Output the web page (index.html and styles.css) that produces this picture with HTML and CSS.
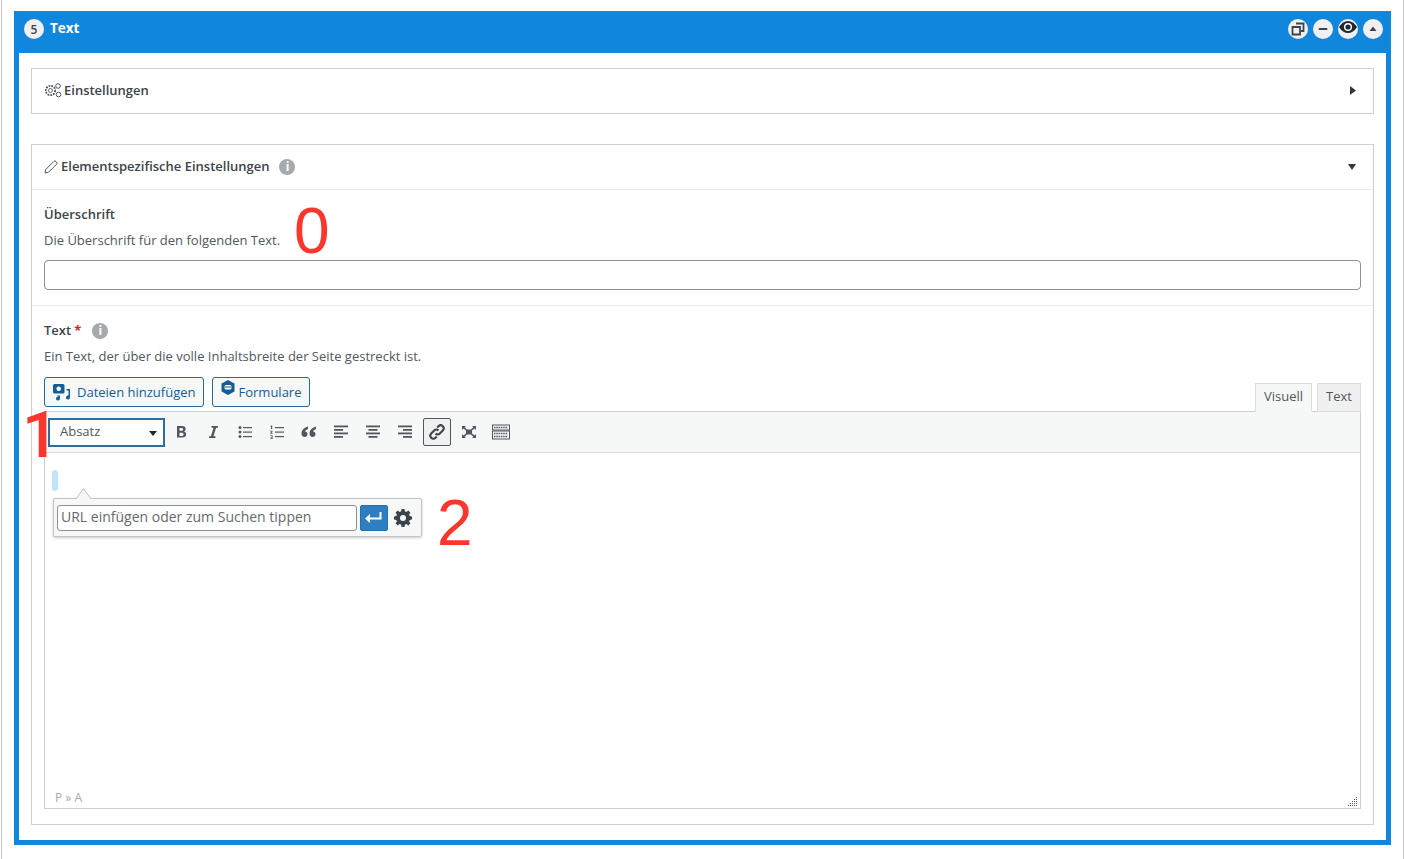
FILE: index.html
```html
<!DOCTYPE html>
<html lang="de">
<head>
<meta charset="utf-8">
<title>Text</title>
<link rel="stylesheet" href="styles.css">
</head>
<body>
<div class="page">
  <section class="panel">
    <header class="panel-head">
      <span class="badge">5</span>
      <span class="panel-title">Text</span>
      <div class="panel-actions">
        <span class="round"><svg width="14" height="14" viewBox="0 0 14 14"><path d="M5 1.500h7.500V9H10M1.500 5H9v7.500H1.500z" fill="none" stroke="#3c434a" stroke-width="1.800"/></svg></span>
        <span class="round"><svg width="12" height="12" viewBox="0 0 12 12"><rect x="1.500" y="5" width="9" height="2" rx="1" fill="#3c434a"/></svg></span>
        <span class="round eye"><svg width="20" height="14" viewBox="0 0 20 14"><path d="M1 7c2.500-4 5.500-6 9-6s6.500 2 9 6c-2.500 4-5.500 6-9 6S3.500 11 1 7z" fill="#23282d"/><circle cx="10" cy="7" r="4" fill="#fff"/><circle cx="10" cy="7" r="2.600" fill="#23282d"/></svg></span>
        <span class="round"><svg width="8" height="6" viewBox="0 0 8 6"><path d="M4 .5 7.500 5H.5z" fill="#3c434a"/></svg></span>
      </div>
    </header>
    <div class="panel-body">
      <div class="box box-settings">
        <svg class="gears" width="18" height="15" viewBox="0 0 18 15" fill="none" stroke="#50575e"><circle cx="6.500" cy="7.500" r="4.700" stroke-width="1.800" stroke-dasharray="1.800 1"/><circle cx="6.500" cy="7.500" r="2" stroke-width=".9"/><circle cx="14" cy="3" r="2.300" stroke-width="1"/><circle cx="14.500" cy="11.500" r="2.300" stroke-width="1"/></svg>
        <span class="box-title">Einstellungen</span>
        <svg class="caret" width="6" height="9" viewBox="0 0 6 9"><path d="M0 0l6 4.500L0 9z" fill="#32373c"/></svg>
      </div>

      <div class="box box-main">
        <div class="box-head">
          <svg class="pencil" width="14" height="14" viewBox="0 0 14 14"><path d="M1 13l.8-3.600L9.800 1.400a1.500 1.500 0 0 1 2.100 0l.7.700a1.500 1.500 0 0 1 0 2.100L4.600 12.200z" fill="none" stroke="#50575e"/></svg>
          <span class="box-title">Elementspezifische Einstellungen</span>
          <span class="info">i</span>
          <svg class="caret" width="8" height="6" viewBox="0 0 8 6"><path d="M0 0h8L4 6z" fill="#32373c"/></svg>
        </div>

        <div class="field field-heading">
          <div class="label">Überschrift</div>
          <p class="desc">Die Überschrift für den folgenden Text.</p>
          <div class="text-input"></div>
        </div>

        <div class="field field-text">
          <div class="label">Text<span class="req">*</span><span class="info">i</span></div>
          <p class="desc">Ein Text, der über die volle Inhaltsbreite der Seite gestreckt ist.</p>
          <div class="media-row">
            <span class="btn"><svg width="18" height="18" viewBox="0 0 18 18"><path fill="#135e96" d="M1.500 1h8.500a1.500 1.500 0 0 1 1.500 1.500V9a1.500 1.500 0 0 1-1.500 1.500H1.500A1.500 1.500 0 0 1 0 9V2.500A1.500 1.500 0 0 1 1.500 1z"/><circle cx="5.700" cy="5.700" r="2.300" fill="#fff"/><path fill="#135e96" d="M4 12.500h3v3a2 2 0 1 1-1.500-1.900V13H4zM13.500 6H17v8.500a2 2 0 1 1-1.500-1.900V7.500h-2z"/></svg>Dateien hinzufügen</span>
            <span class="btn btn-form"><svg class="form-icon" width="14" height="16" viewBox="0 0 14 16"><path fill="#135e96" d="M7 0l6.500 3.500v8L7 15 .5 11.500v-8z"/><rect x="3.500" y="5" width="7" height="4.500" rx="1.500" fill="#fff"/><rect x="3.500" y="6.500" width="7" height="1" fill="#135e96"/></svg>Formulare</span>
          </div>

          <div class="editor">
            <div class="tabs">
              <span class="tab tab-active">Visuell</span>
              <span class="tab">Text</span>
            </div>
            <div class="editor-frame">
              <div class="toolbar">
                <div class="format-select">Absatz<span class="select-arrow"></span></div>
                <span class="tool"><svg width="20" height="20" viewBox="0 0 20 20"><path fill="#50575e" d="M6 4h5c2.200 0 3.700 1.100 3.700 2.900 0 1.200-.7 2.100-1.700 2.500 1.300.3 2.200 1.300 2.200 2.800 0 2.200-1.700 3.300-4 3.300H6zm2.500 2v2.800h2c1 0 1.600-.5 1.600-1.400S11.500 6 10.500 6zm0 4.700V14h2.300c1.100 0 1.800-.6 1.800-1.700s-.7-1.600-1.800-1.600z"/></svg></span>
                <span class="tool"><svg width="20" height="20" viewBox="0 0 20 20"><path fill="#50575e" d="M8.500 4H15v1.500l-2 .5-2.500 8 2 .5V16H6v-1.500l2-.5 2.500-8-2-.5z"/></svg></span>
                <span class="tool"><svg width="20" height="20" viewBox="0 0 20 20" fill="#50575e"><circle cx="5" cy="5.500" r="1.500"/><circle cx="5" cy="10" r="1.500"/><circle cx="5" cy="14.500" r="1.500"/><rect x="8" y="5" width="9" height="1.200"/><rect x="8" y="9.500" width="9" height="1.200"/><rect x="8" y="14" width="9" height="1.200"/></svg></span>
                <span class="tool"><svg width="20" height="20" viewBox="0 0 20 20" fill="#50575e"><path d="M4 3.500h1.200v3.500H4V4.500H3.300zM3.200 8.700h2.400v.8L4.400 11h1.300v.7H3.200V11l1.400-1.600H3.200zM3.200 13.300h2.400v3.700H3.200v-.7h1.500v-.8H3.800v-.6h.9v-.9H3.200z"/><rect x="8" y="5" width="9" height="1.200"/><rect x="8" y="9.500" width="9" height="1.200"/><rect x="8" y="14" width="9" height="1.200"/></svg></span>
                <span class="tool"><svg width="20" height="20" viewBox="0 0 20 20" fill="#50575e"><path d="M9 4.500C5.500 5.500 2.500 8 2.500 11.500c0 2.300 1.400 3.500 3.100 3.500 1.600 0 2.900-1.100 2.900-2.700S7.400 9.600 6 9.600c.4-1.100 1.600-2 3-2.600zM17 4.500c-3.500 1-6.500 3.500-6.500 7 0 2.300 1.400 3.500 3.100 3.500 1.600 0 2.900-1.100 2.900-2.700s-1.100-2.700-2.500-2.700c.4-1.100 1.600-2 3-2.600z"/></svg></span>
                <span class="tool"><svg width="20" height="20" viewBox="0 0 20 20" fill="#50575e"><rect x="3" y="3.500" width="14" height="1.800"/><rect x="3" y="7" width="9" height="1.800"/><rect x="3" y="10.500" width="14" height="1.800"/><rect x="3" y="14" width="9" height="1.800"/></svg></span>
                <span class="tool"><svg width="20" height="20" viewBox="0 0 20 20" fill="#50575e"><rect x="3" y="3.500" width="14" height="1.800"/><rect x="5.500" y="7" width="9" height="1.800"/><rect x="3" y="10.500" width="14" height="1.800"/><rect x="5.500" y="14" width="9" height="1.800"/></svg></span>
                <span class="tool"><svg width="20" height="20" viewBox="0 0 20 20" fill="#50575e"><rect x="3" y="3.500" width="14" height="1.800"/><rect x="8" y="7" width="9" height="1.800"/><rect x="3" y="10.500" width="14" height="1.800"/><rect x="8" y="14" width="9" height="1.800"/></svg></span>
                <span class="tool tool-active"><svg width="20" height="20" viewBox="0 0 20 20" fill="none" stroke="#3c434a" stroke-width="2"><path d="M8.500 11.500a3 3 0 0 0 4.300 0l3-3a3 3 0 0 0-4.300-4.300l-1.300 1.300"/><path d="M11.500 8.500a3 3 0 0 0-4.300 0l-3 3a3 3 0 0 0 4.300 4.300l1.300-1.300"/></svg></span>
                <span class="tool"><svg width="20" height="20" viewBox="0 0 20 20" fill="#50575e"><rect x="7" y="7.500" width="6" height="5"/><path d="M3 4h4L5.700 5.300 8 7.500 7 8.500 4.500 6.500 3 8zM17 4h-4l1.300 1.300L12 7.500l1 1 2.500-2L17 8zM3 16h4l-1.300-1.300L8 12.500l-1-1-2.500 2L3 12zM17 16h-4l1.300-1.300L12 12.500l1-1 2.500 2L17 12z"/></svg></span>
                <span class="tool"><svg width="20" height="20" viewBox="0 0 20 20"><rect x="1.500" y="3" width="17" height="5" fill="none" stroke="#50575e"/><rect x="1.500" y="9" width="17" height="8" fill="none" stroke="#50575e"/><path d="M3 5.500h14M3 11.500h14M3 14.500h14" stroke="#50575e" stroke-width="1.500" stroke-dasharray="1.500 .8"/></svg></span>
              </div>
              <div class="edit-area">
                <span class="caret-mark"></span>
                <div class="link-popup">
                  <div class="link-input">URL einfügen oder zum Suchen tippen</div>
                  <span class="apply"><svg width="18" height="12" viewBox="0 0 18 12"><path fill="#fff" d="M14.500 0h2v7.500H5V11L0 6.500 5 2v3.500h9.500z"/></svg></span>
                  <svg class="cog" width="18" height="18" viewBox="0 0 18 18"><path fill="#3c434a" fill-rule="evenodd" d="M7.500 0h3l.4 2.300 1.500.6L14.300 1.600l2.100 2.100-1.300 1.900.6 1.500 2.300.4v3l-2.300.4-.6 1.500 1.300 1.900-2.100 2.100-1.900-1.300-1.500.6-.4 2.300h-3l-.4-2.300-1.500-.6-1.900 1.300-2.100-2.100 1.300-1.900-.6-1.500L0 10.500v-3l2.300-.4.600-1.500L1.600 3.700l2.100-2.100 1.900 1.300 1.500-.6zM9 6a3 3 0 1 0 0 6 3 3 0 0 0 0-6z"/></svg>
                </div>
              </div>
              <div class="status-bar">
                <span class="path">P » A</span>
                <svg class="grip" width="10" height="10" viewBox="0 0 10 10" fill="#50575e"><rect x="8" y="0" width="1" height="1"/><rect x="8" y="2" width="1" height="1"/><rect x="6" y="2" width="1" height="1"/><rect x="8" y="4" width="1" height="1"/><rect x="6" y="4" width="1" height="1"/><rect x="4" y="4" width="1" height="1"/><rect x="8" y="6" width="1" height="1"/><rect x="6" y="6" width="1" height="1"/><rect x="4" y="6" width="1" height="1"/><rect x="2" y="6" width="1" height="1"/><rect x="8" y="8" width="1" height="1"/><rect x="6" y="8" width="1" height="1"/><rect x="4" y="8" width="1" height="1"/><rect x="2" y="8" width="1" height="1"/><rect x="0" y="8" width="1" height="1"/></svg>
              </div>
            </div>
          </div>
        </div>
      </div>
    </div>
  </section>
  <span class="mark mark-0">0</span>
  <span class="mark mark-1">1</span>
  <span class="mark mark-2">2</span>
</div>
</body>
</html>
```
FILE: styles.css
```css
* { box-sizing: border-box; }
html, body { margin: 0; padding: 0; background: #fff; }
body { font-family: "Open Sans", "Noto Sans", sans-serif; font-size: 13px; color: #3c434a; overflow: hidden; }
.page { position: relative; width: 1404px; height: 859px; padding: 11px 13px 0 14px; }
.page::before { content: ""; position: absolute; left: 1px; top: 0; bottom: 0; width: 1px; background: #c8c8cc; }
.page::after { content: ""; position: absolute; right: 0; top: 0; bottom: 0; width: 1px; background: #c8c8cc; }
.panel { height: 834px; border: 5px solid #1087dc; border-top: 0; display: flex; flex-direction: column; }
.panel-head { height: 42px; flex: none; margin: 0 -5px; background: #1087dc; display: flex; align-items: center; padding: 0 8px 6px 10px; color: #fff; }
.badge { width: 20px; height: 20px; border-radius: 50%; background: #f0f0f1; color: #3c434a; font-size: 12px; font-weight: 600; display: flex; align-items: center; justify-content: center; }
.panel-title { margin: 0 0 2px 6px; font-size: 13.500px; font-weight: 700; }
.panel-actions { margin-left: auto; display: flex; gap: 5px; }
.round { width: 20px; height: 20px; border-radius: 50%; background: #f0f0f1; display: flex; align-items: center; justify-content: center; }
.eye svg { margin-top: -4px; }
.panel-body { flex: 1; padding: 15px 12px; display: flex; flex-direction: column; gap: 30px; min-height: 0; }
.box { border: 1px solid #ccd0d4; background: #fff; }
.box-title { font-weight: 600; color: #3c434a; }
.box-settings { height: 46px; flex: none; display: flex; align-items: center; padding: 0 17px 2px 12px; }
.gears { margin-right: 2px; }
.caret { margin-left: auto; }
.box-main { flex: 1; display: flex; flex-direction: column; min-height: 0; }
.box-head { height: 45px; flex: none; display: flex; align-items: center; padding: 0 17px 0 12px; border-bottom: 1px solid #eaebec; }
.box-head .box-title { margin-bottom: 2px; }
.pencil { margin-right: 3px; }
.info { display: flex; flex: none; width: 16px; height: 16px; margin-left: 10px; border-radius: 50%; background: #a7aaad; color: #fff; font-size: 12px; font-weight: 700; align-items: center; justify-content: center; line-height: 1; }
.label { display: flex; align-items: center; height: 18px; font-weight: 600; color: #3c434a; line-height: 18px; }
.label .info { margin: 2px 0 0 11px; }
.req { color: #e0202a; font-weight: 700; margin-left: 3px; }
.desc { margin: 8px 0 0; line-height: 18px; color: #50575e; font-size: 13px; }
.field { padding: 15px 12px 0; }
.field-heading { height: 116px; flex: none; border-bottom: 1px solid #eaebec; }
.text-input { height: 30px; margin-top: 11px; border: 1px solid #8c8f94; border-radius: 4px; background: #fff; }
.field-text { flex: 1; display: flex; flex-direction: column; min-height: 0; padding-bottom: 15px; }
.media-row { display: flex; gap: 8px; margin-top: 12px; height: 30px; flex: none; }
.btn { height: 30px; display: flex; align-items: center; gap: 6px; padding: 0 7px; border: 1px solid #2c6a94; border-radius: 3px; color: #135e96; background: #f6f7f7; font-size: 13px; }
.btn svg { margin-left: 1px; }
.btn-form { gap: 4px; padding-right: 8px; }
.form-icon { margin-top: -8px; }
.editor { flex: 1; display: flex; flex-direction: column; min-height: 0; margin-top: -23px; }
.tabs { height: 28px; flex: none; display: flex; justify-content: flex-end; gap: 5px; align-items: flex-end; position: relative; z-index: 1; margin-bottom: -1px; }
.tab { height: 29px; padding: 0 8px 2px; border: 1px solid #dcdcde; background: #f0f0f1; color: #50575e; display: flex; align-items: center; font-size: 13px; line-height: 1; }
.tab-active { background: #f6f7f7; border-bottom-color: #f6f7f7; }
.editor-frame { flex: 1; border: 1px solid #ccd0d4; display: flex; flex-direction: column; min-height: 0; }
.toolbar { height: 41px; flex: none; background: #f6f7f7; border-bottom: 1px solid #dcdcde; display: flex; align-items: center; padding-left: 3px; }
.format-select { width: 117px; height: 29px; border: 2px solid #2f6d9f; background: #fff; display: flex; align-items: center; padding: 0 0 2px 10px; color: #50575e; position: relative; font-size: 13px; }
.select-arrow { position: absolute; right: 6px; top: 11px; border-left: 4.500px solid transparent; border-right: 4.500px solid transparent; border-top: 5px solid #23282d; }
.tool { width: 28px; height: 28px; margin: 0 2px; border: 1px solid transparent; border-radius: 2px; display: flex; align-items: center; justify-content: center; }
.tool-active { border-color: #50575e; background: #f0f0f1; }
.edit-area { flex: 1; position: relative; background: #fff; min-height: 0; }
.caret-mark { position: absolute; left: 7px; top: 17px; width: 6px; height: 21px; border-radius: 3px; background: #bfe4fb; }
.link-popup { position: absolute; left: 8px; top: 45px; width: 369px; height: 39px; background: #f6f7f7; border: 1px solid #c3c4c7; border-radius: 2px; box-shadow: 0 1px 3px rgba(0,0,0,.2); display: flex; align-items: center; padding-left: 3px; }
.link-popup::before { content: ""; position: absolute; left: 23px; top: -7px; width: 12px; height: 12px; background: #f6f7f7; border-left: 1px solid #c3c4c7; border-top: 1px solid #c3c4c7; transform: rotate(45deg) skew(8deg, 8deg); }
.link-input { width: 300px; height: 26px; background: #fff; border: 1px solid #8c8f94; border-radius: 3px; padding-left: 3px; line-height: 22px; color: #646970; font-size: 14px; position: relative; white-space: nowrap; }
.apply { width: 28px; height: 26px; margin-left: 3px; background: #2e7fc2; border: 1px solid #2271b1; border-radius: 2px; display: flex; align-items: center; justify-content: center; position: relative; }
.cog { margin-left: 6px; position: relative; }
.status-bar { height: 24px; flex: none; background: #fff; display: flex; align-items: center; justify-content: space-between; padding: 2px 2px 0 10px; color: #a7aaad; font-size: 12px; }
.grip { margin-top: 9px; }
.mark { position: absolute; font-family: "Liberation Sans", Arial, sans-serif; font-size: 64px; line-height: 1; color: #f9372c; }
.mark-0 { left: 294px; top: 199px; }
.mark-1 { left: 22px; top: 403px; font-family: Roboto, sans-serif; font-size: 65px; font-weight: 500; }
.mark-2 { left: 437px; top: 491px; }
```
